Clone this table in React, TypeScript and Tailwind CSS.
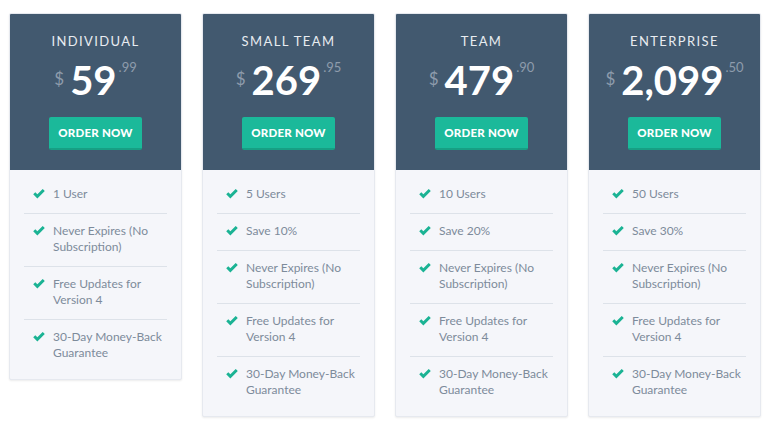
import React from "react";

type Plan = { name: string; dollars: string; cents: string; features: string[] };

const plans: Plan[] = [
  { name: "INDIVIDUAL", dollars: "59", cents: ".99", features: ["1 User", "Never Expires (No Subscription)", "Free Updates for Version 4", "30-Day Money-Back Guarantee"] },
  { name: "SMALL TEAM", dollars: "269", cents: ".95", features: ["5 Users", "Save 10%", "Never Expires (No Subscription)", "Free Updates for Version 4", "30-Day Money-Back Guarantee"] },
  { name: "TEAM", dollars: "479", cents: ".90", features: ["10 Users", "Save 20%", "Never Expires (No Subscription)", "Free Updates for Version 4", "30-Day Money-Back Guarantee"] },
  { name: "ENTERPRISE", dollars: "2,099", cents: ".50", features: ["50 Users", "Save 30%", "Never Expires (No Subscription)", "Free Updates for Version 4", "30-Day Money-Back Guarantee"] },
];

function Check() {
  return (
    <svg width="12" height="10" viewBox="0 0 11 9" className="shrink-0 mt-[3px]">
      <path d="M0.2 4.7 L2.1 2.8 L4 4.7 L8.9 -0.1 L10.8 1.8 L4 8.6 Z" fill="#1bb394" />
    </svg>
  );
}

export default function App() {
  return (
    <div className="w-[773px] h-[426px] bg-white flex items-start gap-5 pl-[9px] pt-[13px]" style={{ fontFamily: "Lato, 'Open Sans', sans-serif" }}>
      {plans.map((p) => (
        <div key={p.name} className="w-[173px] rounded-[2px] overflow-hidden bg-[#f5f6fa] border border-[#e6e9ef] shadow-[0_1px_2px_rgba(0,0,0,0.08)]">
          <div className="bg-[#42596f] h-[157px] flex flex-col items-center pt-[20px] -mx-px -mt-px">
            <div className="text-[13px] tracking-[1.4px] text-[#e8ecf1] leading-[16px]">{p.name}</div>
            <div className="flex items-start mt-[8px] h-[46px]">
              <span className="text-[17px] text-[#8e9cac] mt-[13px] mr-[6px] leading-none">$</span>
              <span className="text-[40px] font-bold text-white leading-[46px]">{p.dollars}</span>
              <span className="text-[13px] text-[#8e9cac] mt-[4px] ml-[2px] leading-none">{p.cents}</span>
            </div>
            <button className="mt-[14px] w-[93px] h-[33px] rounded-[2px] bg-[#1bb99a] border-b-2 border-[#179f84] text-white text-[11.5px] font-black tracking-[0.2px]">
              ORDER NOW
            </button>
          </div>
          <ul className="px-[14px] py-[7px]">
            {p.features.map((f, i) => (
              <li key={i} className={`flex gap-[8px] pl-[9px] pt-[9px] pb-[11px] ${i > 0 ? "border-t border-[#dde2e9]" : ""}`}>
                <Check />
                <span className="text-[12px] leading-[16px] text-[#7d8b9b]">{f}</span>
              </li>
            ))}
          </ul>
        </div>
      ))}
    </div>
  );
}
